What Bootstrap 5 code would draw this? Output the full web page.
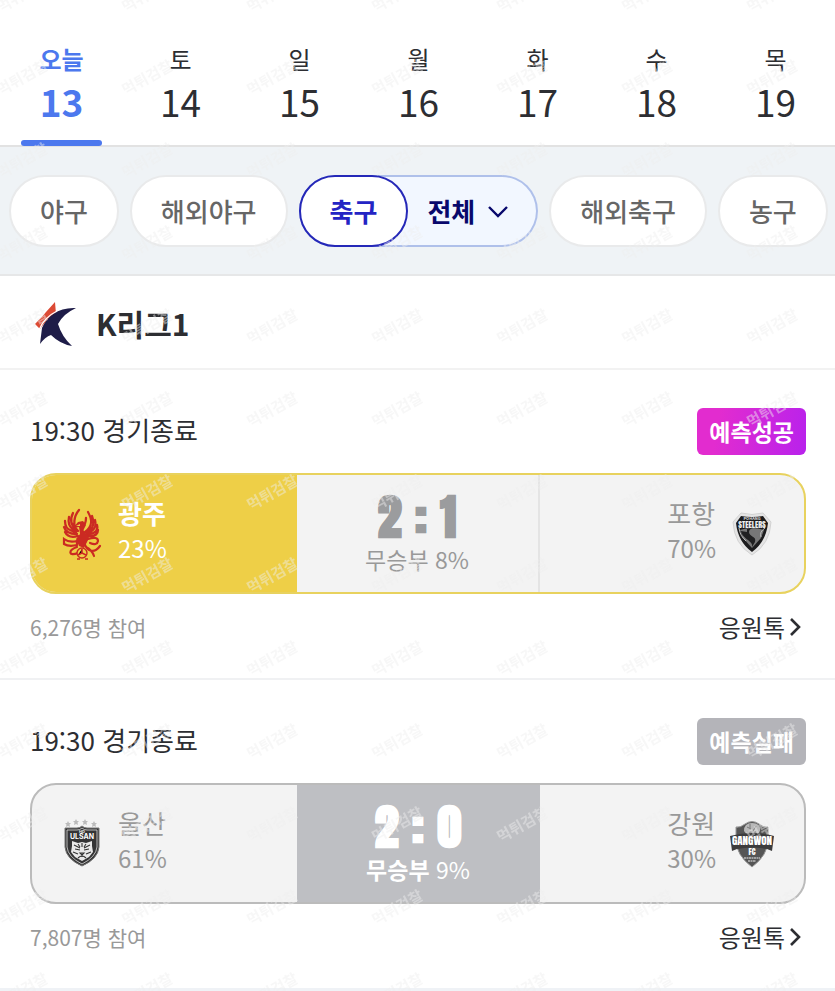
<!DOCTYPE html>
<html lang="ko">
<head>
<meta charset="utf-8">
<meta name="viewport" content="width=device-width, initial-scale=1">
<title>K리그1 승부예측</title>
<link href="https://cdn.jsdelivr.net/npm/bootstrap@5.3.0/dist/css/bootstrap.min.css" rel="stylesheet">
<style>
body{font-family:"Noto Sans CJK KR","Noto Sans",sans-serif;color:#2d2e32;background:#fff}
a{color:inherit;text-decoration:none}
.day-tabs{padding-left:2px;border-bottom:2px solid #e2e2e2}
.day-tab{padding:41px 0 20px;color:#2d2e32}
.day-name{font-size:24px;line-height:36px}
.day-num{font-size:37px;line-height:48px}
.day-tab.active{color:#4c78ee;font-weight:700}
.day-line{width:81px;height:6px;border-radius:3px;margin-bottom:-1px}
.active .day-line{background:#4c78ee}
.sports{background:#eff3f6;border-bottom:2px solid #e6e7e8;padding:28px 0 27px 9px;gap:11px}
.sport{height:72px;border:2px solid #e9eaeb;border-radius:36px;background:#fff;color:#666;font-size:26px;font-weight:500;line-height:36px;padding:0 29px}
.sport-group{border-radius:36px;background:#f2f7ff;box-shadow:inset 0 0 0 2px #afc0ea}
.sport.active{border-color:#2528b8;color:#2424c4;font-weight:700}
.sub-filter{border:0;background:none;color:#08086c;font-size:26px;font-weight:700;line-height:36px;padding:0 30px 0 19px;gap:13px}
.league{height:94px;padding:2px 32px 0;border-bottom:2px solid #f2f2f2}
.league h1{font-size:30px;line-height:44px;margin:0 0 0 18px}
.match{padding:38px 29px 33px 30px;border-bottom:2px solid #f0f1f3}
.match:last-child{border-bottom:3px solid #eff2f6}
.match-time{font-size:26px;line-height:44px;font-weight:400}
.result-tag{font-size:23px;line-height:47px;border-radius:6px;padding:0 12px;font-weight:700}
.tag-hit{background:linear-gradient(100deg,#e22ccf 20%,#b822ec)}
.tag-miss{background:#b4b4b9}
.vote-bar{height:121px;margin-top:18px;border:2px solid #bbb;border-radius:26px;background:#f3f3f3;color:#999}
.vote-bar.home-win{border-color:#e8d25e}
.side{flex:1 1 0;padding:0 30px 0 28px}
.middle{width:243px}
.home-win .home{background:#eecf47;color:#fff}
.home-win .middle{border-right:2px solid #e4e4e4}
.draw .middle{background:#bebfc3;color:#fff}
.side-text{padding-bottom:8px;margin:0 14px}
.team{font-size:26px;line-height:36px}
.pct{font-size:24px;line-height:34px}
.draw-pct{font-size:23px;line-height:34px}
.picked{font-weight:700}
.crest{width:44px;height:52px;flex:none}
.score{font-family:Anton,Impact,"Liberation Sans",sans-serif;font-size:47px;line-height:50px;font-weight:700;-webkit-text-stroke:1px currentColor;color:#9b9c9e;gap:14px}
.draw .score{color:#fff}
.foot{margin-top:15px;line-height:36px}
.joined{font-size:21px;color:#999}
.talk{font-size:24px}
.stamp{inset:0;width:100%;height:100%;pointer-events:none}
.stamp text{font-size:15px;font-weight:700;fill:#ececec;fill-opacity:.46}
</style>
<script src="https://cdn.jsdelivr.net/npm/bootstrap@5.3.0/dist/js/bootstrap.bundle.min.js"></script>
</head>
<body>
<div class="position-relative overflow-hidden">
<nav class="day-tabs d-flex text-center" aria-label="날짜">
  <a href="#" class="day-tab active w-100 d-flex flex-column align-items-center pb-0" aria-current="date"><span class="day-name">오늘</span><span class="day-num">13</span><span class="day-line mt-auto"></span></a>
  <a href="#" class="day-tab w-100 d-flex flex-column"><span class="day-name">토</span><span class="day-num">14</span></a>
  <a href="#" class="day-tab w-100 d-flex flex-column"><span class="day-name">일</span><span class="day-num">15</span></a>
  <a href="#" class="day-tab w-100 d-flex flex-column"><span class="day-name">월</span><span class="day-num">16</span></a>
  <a href="#" class="day-tab w-100 d-flex flex-column"><span class="day-name">화</span><span class="day-num">17</span></a>
  <a href="#" class="day-tab w-100 d-flex flex-column"><span class="day-name">수</span><span class="day-num">18</span></a>
  <a href="#" class="day-tab w-100 d-flex flex-column"><span class="day-name">목</span><span class="day-num">19</span></a>
</nav>

<div class="sports d-flex text-nowrap">
  <button type="button" class="sport">야구</button>
  <button type="button" class="sport">해외야구</button>
  <div class="sport-group d-flex">
    <button type="button" class="sport active">축구</button>
    <button type="button" class="sub-filter d-flex align-items-center">전체
      <svg width="20" height="13" viewBox="0 0 20 13" fill="none" stroke="currentColor" stroke-width="2.4" aria-hidden="true"><path d="M1 2l9 9 9-9"/></svg>
    </button>
  </div>
  <button type="button" class="sport">해외축구</button>
  <button type="button" class="sport">농구</button>
</div>

<header class="league d-flex align-items-center">
  <svg width="46" height="48" viewBox="0 0 46 48" aria-hidden="true">
    <path fill="#dc4a34" d="M23 3L14 13Q10 18 3 25L8 30Q14 21 24 15Z"/>
    <path fill="#1e1c48" d="M44 9C27 8 15 17 10 29L8 45Q13 38 19 36 28 45 40 47 30 38 26 25 31 15 44 9Z"/>
    <path fill="none" stroke="#fff" stroke-width="1.2" d="M7 31C11 21 17 16 25 12"/>
  </svg>
  <h1 class="fw-bold">K리그1</h1>
</header>

<main>
<section class="match">
  <div class="d-flex justify-content-between">
    <h2 class="match-time m-0">19:30 경기종료</h2>
    <span class="result-tag tag-hit text-white">예측성공</span>
  </div>
  <div class="vote-bar home-win d-flex overflow-hidden">
    <div class="side home d-flex align-items-center">
      <svg class="crest" viewBox="0 0 44 52" role="img" aria-label="광주 FC">
        <g fill="none" stroke="#cb2a22" stroke-linecap="round" stroke-width="2.3">
          <path d="M18 23C12 18 14 8 19 2M17 22C10 17 10 11 13 5M16 23C8 19 8 14 9 9M16 24C6 22 5 18 5 13M17 26C8 26 5 23 4 19M18 28C11 30 7 28 5 24"/>
          <path d="M25 24C34 18 31 9 28 4M26 24C35 21 34 13 32 8M27 25C37 22 36 16 35 12M27 26C37 26 38 21 37 17M28 28C36 29 38 25 38 22M22 19C25 17 26 13 26 10"/>
        </g>
        <path fill="#cb2a22" d="M13 20L18 14 23 13 26 17 24 21C22 24 28 25 29 30L24 40 19 38 16 31 20 26 19 19Z"/>
        <path fill="#eecf47" d="M16 18L20 16 20 18Z"/>
        <g fill="none" stroke="#cb2a22" stroke-width="2.2" stroke-linecap="round">
          <path d="M4 31Q9 35 17 33L17 37Q9 39 4 36ZM28 31Q38 28 38 33 37 38 30 35M24 34C27 44 34 46 40 38M17 39C8 42 8 49 18 45M26 39Q32 42 34 48"/>
        </g>
        <circle cx="22" cy="45" r="5" fill="#eecf47" stroke="#cb2a22" stroke-width="1.4"/>
        <path d="M22 41V45L18 47M22 45L26 47M17 51h3M25 51h3" stroke="#cb2a22" stroke-width="1.6"/>
      </svg>
      <div class="side-text"><div class="team picked">광주</div><div class="pct">23%</div></div>
    </div>
    <div class="middle d-flex flex-column align-items-center justify-content-center">
      <div class="score d-flex"><span>2</span><span>:</span><span>1</span></div>
      <div class="draw-pct">무승부 8%</div>
    </div>
    <div class="side d-flex align-items-center justify-content-end">
      <div class="side-text"><div class="team">포항</div><div class="pct">70%</div></div>
      <svg class="crest" viewBox="0 0 44 52" role="img" aria-label="포항 스틸러스">
        <path d="M11 5Q22 8 33 5L41 14Q40 36 22 47 4 36 3 14Z" fill="#e4e4e4" stroke="#d2d2d2"/>
        <path d="M11 8Q22 10 33 8L38 15Q36 34 22 44 8 34 6 15Z" fill="#1c1c1d"/>
        <path d="M10 22Q22 18 34 22L31 30 22 40 13 30Z" fill="#777"/>
        <path d="M31 20Q19 19 19 24C19 29 27 28 25 34L22 39C24 33 12 31 11 23L17 24 17 21Q24 18 31 20Z" fill="#202021"/>
        <path d="M35 20Q29 24 31 29M9 20Q10 28 16 33" fill="none" stroke="#bbb"/>
        <text x="22" y="12" text-anchor="middle" font-size="4" font-weight="700" fill="#ddd">POHANG</text>
        <text x="22" y="20" text-anchor="middle" font-size="8" font-family="Anton,Impact,sans-serif" fill="#eee">STEELERS</text>
      </svg>
    </div>
  </div>
  <div class="foot d-flex justify-content-between">
    <span class="joined">6,276명 참여</span>
    <a href="#" class="talk d-flex align-items-center">응원톡<svg class="mx-1" width="13" height="20" viewBox="0 0 13 20" fill="none" stroke="currentColor" stroke-width="2.6" aria-hidden="true"><path d="M2 2l8 8-8 8"/></svg></a>
  </div>
</section>

<section class="match">
  <div class="d-flex justify-content-between">
    <h2 class="match-time m-0">19:30 경기종료</h2>
    <span class="result-tag tag-miss text-white">예측실패</span>
  </div>
  <div class="vote-bar draw d-flex overflow-hidden">
    <div class="side d-flex align-items-center">
      <svg class="crest" viewBox="0 0 44 52" role="img" aria-label="울산 HD">
        <g fill="#bbb"><path id="star" d="M8 3l1 2 2 0-1.500 1.500.5 2.500-2-1-2 1 .5-2.500L5 5l2 0z"/><use href="#star" x="8" y="-2"/><use href="#star" x="17" y="-2"/><use href="#star" x="26"/></g>
        <path d="M5 10H17Q20 10 22 8 24 10 27 10H39V29Q38 41 22 48 6 41 5 29Z" fill="#333" stroke="#777"/>
        <path d="M7 12H17Q20 12 22 10 24 12 27 12H37V29Q36 39 22 46 8 39 7 29Z" fill="#343435" stroke="#ddd" stroke-width=".8"/>
        <text x="22" y="15" text-anchor="middle" font-size="4" font-weight="700" font-family="Inter,sans-serif" fill="#eee">HD</text>
        <text x="22" y="21" text-anchor="middle" font-size="7" font-weight="700" font-family="Inter,sans-serif" fill="#fff">ULSAN</text>
        <path d="M12 23L18 25 22 24 26 25 32 23 32 28 33 34 29 39 22 43 15 39 11 34 12 28Z" fill="#e8e8e8"/>
        <path d="M14 27l6 3M30 27l-6 3M15 31l5 1M29 31l-5 1M22 25v4M18 26l2 3M26 26l-2 3M20 35h4l-2 2zM22 37v2M18 40q4-4 8 0M13 34l5 2M31 34l-5 2" fill="none" stroke="#333" stroke-width="1.1"/>
      </svg>
      <div class="side-text"><div class="team">울산</div><div class="pct">61%</div></div>
    </div>
    <div class="middle d-flex flex-column align-items-center justify-content-center">
      <div class="score d-flex"><span>2</span><span>:</span><span>0</span></div>
      <div class="draw-pct"><span class="picked">무승부</span> 9%</div>
    </div>
    <div class="side d-flex align-items-center justify-content-end">
      <div class="side-text"><div class="team">강원</div><div class="pct">30%</div></div>
      <svg class="crest" viewBox="0 0 44 52" role="img" aria-label="강원 FC">
        <path d="M15 6Q22 1 29 6 34 10 38 9V22Q38 37 22 49 6 37 6 22V9Q10 10 15 6Z" fill="#555" stroke="#999"/>
        <path d="M14 13Q14 5 22 5 31 5 30 13L27 17 17 17Z" fill="#b8b8b8"/>
        <path d="M17 9l4 2M26 8l-3 5M17 14h9M20 6v4" stroke="#777" fill="none"/>
        <path d="M0 18Q22 12 44 18L42 33 37 31Q22 28 7 31L2 33Z" fill="#3c3c3d"/>
        <text x="22" y="27" text-anchor="middle" font-size="11" font-family="Anton,Impact,sans-serif" fill="#fff">GANGWON</text>
        <text x="22" y="37" text-anchor="middle" font-size="8" font-family="Anton,Impact,sans-serif" fill="#fff">FC</text>
        <path d="M14 40h16M18 43h8" stroke="#bbb" stroke-width="1.300" stroke-dasharray="2 .5"/>
      </svg>
    </div>
  </div>
  <div class="foot d-flex justify-content-between">
    <span class="joined">7,807명 참여</span>
    <a href="#" class="talk d-flex align-items-center">응원톡<svg class="mx-1" width="13" height="20" viewBox="0 0 13 20" fill="none" stroke="currentColor" stroke-width="2.6" aria-hidden="true"><path d="M2 2l8 8-8 8"/></svg></a>
  </div>
</section>
</main>

<!-- repeating diagonal stamp laid over the whole page -->
<svg class="stamp position-absolute" aria-hidden="true">
  <defs><pattern id="stampTile" patternUnits="userSpaceOnUse" x="-40" y="36" width="125" height="83"><text x="62" y="47" text-anchor="middle" transform="rotate(-29 62 41)">먹튀검찰</text></pattern></defs>
  <rect width="100%" height="100%" fill="url(#stampTile)"/>
</svg>
</div>
</body>
</html>
